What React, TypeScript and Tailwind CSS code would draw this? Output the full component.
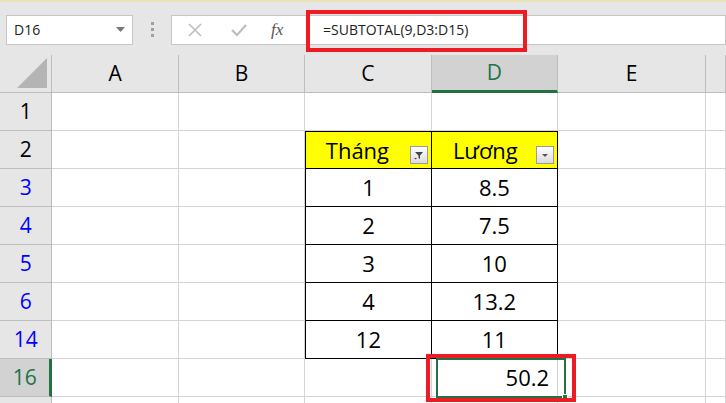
import React from "react";

const cols = [
  { k: "A", w: 128 },
  { k: "B", w: 128 },
  { k: "C", w: 128 },
  { k: "D", w: 128 },
  { k: "E", w: 150 },
  { k: "", w: 20 },
];
const rows = ["1", "2", "3", "4", "5", "6", "14", "16", ""];
const data: Record<string, [string, string]> = {
  "3": ["1", "8.5"],
  "4": ["2", "7.5"],
  "5": ["3", "10"],
  "6": ["4", "13.2"],
  "14": ["12", "11"],
};

function FilterBtn({ funnel }: { funnel?: boolean }) {
  return (
    <div className="absolute right-[3px] bottom-[4px] w-[18px] h-[18px] border border-[#9a9a9a] bg-gradient-to-b from-white to-[#dcdcdc] flex items-center justify-center">
      {funnel ? (
        <svg width="12" height="12" viewBox="0 0 12 12">
          <path d="M2 3h8L7 6.5V10L5.5 9V6.5z" fill="#444" />
          <path d="M1 9l1.5 1.5L4 9z" fill="#444" />
        </svg>
      ) : (
        <svg width="10" height="10" viewBox="0 0 10 10">
          <path d="M2 4h6L5 7z" fill="#555" />
        </svg>
      )}
    </div>
  );
}

export default function App() {
  const font = { fontFamily: "'Open Sans','Liberation Sans',sans-serif" };
  return (
    <div className="relative w-[726px] h-[403px] overflow-hidden bg-[#e6e6e6]" style={font}>
      <div className="h-[2px] bg-[#e9e4b8]" />
      {/* toolbar */}
      <div className="h-[53px] flex items-center pt-[2px]">
        <div className="ml-[6px] w-[127px] h-[30px] bg-white border border-[#c6c6c6] flex items-center justify-between px-[7px]">
          <span className="text-[14px] text-[#222]">D16</span>
          <svg width="9" height="6" viewBox="0 0 9 6"><path d="M0 0h9L4.5 5z" fill="#777" /></svg>
        </div>
        <div className="w-[38px] flex flex-col items-center gap-[3px]">
          <div className="w-[3px] h-[3px] bg-[#a0a0a0]" />
          <div className="w-[3px] h-[3px] bg-[#a0a0a0]" />
          <div className="w-[3px] h-[3px] bg-[#a0a0a0]" />
        </div>
        <div className="flex-1 h-[30px] bg-white border border-[#c6c6c6] flex items-center">
          <div className="w-[136px] flex items-center h-full">
            <svg className="ml-[15px]" width="16" height="16" viewBox="0 0 16 16"><path d="M2 2l12 12M14 2L2 14" stroke="#bdbdbd" strokeWidth="1.6" /></svg>
            <svg className="ml-[27px]" width="18" height="16" viewBox="0 0 18 16"><path d="M2 8l5 5L16 3" stroke="#bdbdbd" strokeWidth="2.2" fill="none" /></svg>
            <span className="ml-[23px] text-[17px] italic text-[#555]" style={{ fontFamily: "'Liberation Serif',serif" }}>fx</span>
          </div>
          <span className="ml-[15px] text-[14px] text-[#222]">=SUBTOTAL(9,D3:D15)</span>
        </div>
      </div>
      {/* grid */}
      <div className="flex h-[38px]">
        <div className="w-[53px] border-r border-b border-[#bdbdbd] bg-[#e6e6e6] relative">
          <svg className="absolute right-[4px] bottom-[4px]" width="30" height="30" viewBox="0 0 30 30"><path d="M30 0V30H0z" fill="#b4b4b4" /></svg>
        </div>
        {cols.map((c) => (
          <div
            key={c.k + c.w}
            style={{ width: c.w }}
            className={`flex items-center justify-center text-[21px] border-r border-[#bdbdbd] ${c.k === "D" ? "bg-[#d2d2d2] text-[#217346] border-b-[3px] border-b-[#217346]" : "border-b text-black"}`}
          >
            {c.k}
          </div>
        ))}
      </div>
      {rows.map((r) => {
        const blue = data[r] !== undefined;
        const sel = r === "16";
        return (
          <div key={r || "x"} className="flex h-[38px]">
            <div
              className={`w-[53px] flex items-center justify-center text-[21px] border-b border-[#bdbdbd] ${sel ? "bg-[#d2d2d2] text-[#217346] border-r-[3px] border-r-[#217346]" : "border-r"} ${blue ? "text-[#0000ff]" : sel ? "" : "text-black"}`}
            >
              {r}
            </div>
            {cols.map((c) => {
              let content: React.ReactNode = null;
              let cls = "bg-white border-r border-b border-[#d4d4d4]";
              if ((c.k === "C" || c.k === "D") && r === "2") {
                cls = `bg-[#ffff00] border-b border-black border-r ${c.k === "C" ? "border-l" : ""} border-t`;
                content = (
                  <>
                    <span className={c.k === "C" ? "mr-[22px]" : "mr-[18px]"}>{c.k === "C" ? "Tháng" : "Lương"}</span>
                    <FilterBtn funnel={c.k === "C"} />
                  </>
                );
              } else if ((c.k === "C" || c.k === "D") && blue) {
                cls = `bg-white border-b border-r border-black ${c.k === "C" ? "border-l" : ""}`;
                content = data[r][c.k === "C" ? 0 : 1];
              } else if (c.k === "D" && sel) {
                cls = "bg-white border-b border-r border-[#d4d4d4] justify-end pr-[8px]";
                content = "50.2";
              }
              return (
                <div
                  key={c.k + c.w}
                  style={{ width: c.w }}
                  className={`relative flex items-center justify-center text-[22px] text-black ${cls}`}
                >
                  {content}
                </div>
              );
            })}
          </div>
        );
      })}
      {/* selection */}
      <div className="absolute left-[436px] top-[358px] w-[130px] h-[40px] border-2 border-[#217346] pointer-events-none">
        <div className="absolute right-[-4px] bottom-[-4px] w-[6px] h-[6px] bg-[#217346] border border-white" />
      </div>
      <div className="absolute left-[426px] top-[354px] w-[150px] h-[48px] border-[4px] border-[#ed1c24]" />
      <div className="absolute left-[306px] top-[10px] w-[221px] h-[42px] border-[4px] border-[#ed1c24]" />
    </div>
  );
}
